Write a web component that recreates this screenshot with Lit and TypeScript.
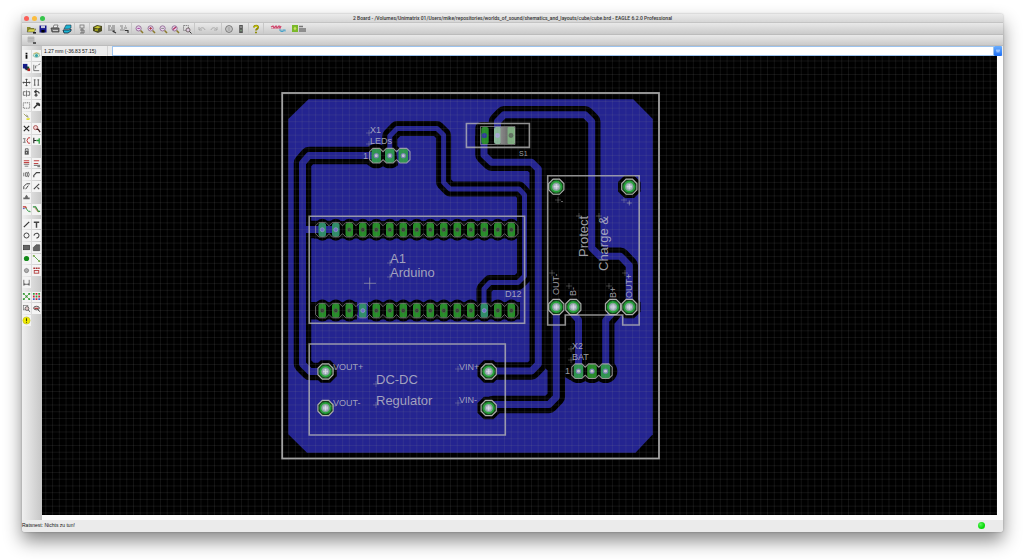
import { LitElement, html, css, svg, SVGTemplateResult } from "lit";
import { customElement } from "lit/decorators.js";

type Icon = { label: string; art: SVGTemplateResult };
const icon = (label: string, art: SVGTemplateResult): Icon => ({ label, art });

const lens = (mark: SVGTemplateResult) => svg`
  <circle cx="4.6" cy="4.4" r="2.6" fill="#e9d6ec" stroke="#8d6a92" stroke-width=".9"/>
  <path d="M6.6 6.4L9 9" stroke="#8a7a2c" stroke-width="1.5"/>${mark}`;

const toolbar: Icon[][] = [
  [
    icon("Open", svg`<path d="M1 3h3l1 1h3v4H1z" fill="#8a8a30"/><path d="M1 8l2-3h7L8 8z" fill="#d9d84a" stroke="#444" stroke-width=".5"/><path d="M7 8h3v1.6H7z" fill="#222"/>`),
    icon("Save", svg`<rect x="1.5" y="1.5" width="7" height="7" fill="#16168c"/><rect x="3" y="1.5" width="4" height="2.6" fill="#c9c9dc"/><rect x="3.4" y="6" width="3.2" height="2.5" fill="#000"/>`),
    icon("Print", svg`<path d="M3 4l1-3h4L7 4z" fill="#eee" stroke="#444" stroke-width=".6"/><path d="M1 4h8v4H2z" fill="#777" stroke="#333" stroke-width=".7"/><path d="M3 6.500h5" stroke="#ddd" stroke-width=".8"/>`),
    icon("CAM processor", svg`<path d="M4 1h5v3L6 5H2z" fill="#1cb5d4" stroke="#234" stroke-width=".6"/><path d="M1 6h6l2-1v2L6 9H2z" fill="#1cb5d4" stroke="#123" stroke-width=".8"/>`),
  ],
  [icon("Switch to schematic", svg`<rect x="3" y="1" width="4" height="3" fill="none" stroke="#777" stroke-width=".8"/><path d="M3 6h4M5 4v5M3 9h4V6" stroke="#666" stroke-width=".9" fill="none"/>`)],
  [icon("Use library", svg`<path d="M1 3l4-2 5 1v5L6 9 1 7z" fill="#4a4a20"/><path d="M2 3.500l3.500-1.500 3.500 1-3 1.500z" fill="#c9c631"/><path d="M3 5h3v2H3z" fill="#9a9a20"/>`)],
  [
    icon("Run script", svg`<path d="M1 2h3M1 4h2M5 2h3M4 4h4M1 6h5" stroke="#777" stroke-width="1"/><path d="M7 5.500v3M5.500 7L9 9" stroke="#333" stroke-width="1.100"/>`),
    icon("Run ULP", svg`<path d="M1 2h3M2 4h2M6 2h1M5 4h3M1 6h5" stroke="#888" stroke-width="1"/><path d="M6 6.500h3v2.500" stroke="#333" stroke-width="1.100" fill="none"/>`),
  ],
  [
    icon("Zoom to fit", lens(svg`<path d="M3.400 4.400h2.400" stroke="#a33a9a" stroke-width="1"/>`)),
    icon("Zoom in", lens(svg`<path d="M3.200 4.400h2.800M4.600 3v2.800" stroke="#a34" stroke-width=".9"/>`)),
    icon("Zoom out", lens(svg`<path d="M3.200 4.400h2.800" stroke="#666" stroke-width=".7"/>`)),
    icon("Redraw", lens(svg`<path d="M3 5.500l3-2.500" stroke="#b03060" stroke-width="1.300"/>`)),
    icon("Zoom select", svg`<rect x="1.500" y="1.500" width="5" height="5" fill="none" stroke="#888" stroke-dasharray="1.500 .6"/><circle cx="6" cy="6" r="2" fill="#dcc9df" stroke="#655" stroke-width=".8"/><path d="M7.500 7.500L9.500 9.500" stroke="#333"/>`),
  ],
  [
    icon("Undo", svg`<path d="M2 3v3h3M2 6c2-3 5-3 6 0" fill="none" stroke="#aaa" stroke-width="1"/>`),
    icon("Redo", svg`<path d="M8 3v3H5M8 6C6 3 3 3 2 6" fill="none" stroke="#aaa" stroke-width="1"/>`),
  ],
  [
    icon("Stop", svg`<circle cx="5" cy="5" r="3.400" fill="#d4d4d4" stroke="#777"/><path d="M3.500 4h3M3.500 6h3" stroke="#888" stroke-width=".9"/>`),
    icon("Go", svg`<rect x="3.200" y="1" width="3.600" height="8" fill="#555"/><circle cx="5" cy="3" r="1" fill="#999"/><circle cx="5" cy="6.500" r="1" fill="#7a947a"/>`),
  ],
  [icon("Help", svg`<path d="M3 3.500C3 1 7.500 1 7 3.600 6.800 5 5 4.800 5 6.600M5 7.800v1.500" fill="none" stroke="#8d8a00" stroke-width="1.900"/><path d="M3.300 3.300C3.600 1.500 7 1.600 6.700 3.500" fill="none" stroke="#e8e000" stroke-width=".9"/>`)],
];

const line = (d: string, c = "#444", w = 1) => svg`<path d=${d} fill="none" stroke=${c} stroke-width=${w}/>`;

const tools: (Icon | null)[][] = [
  [
    icon("Info", svg`<path d="M5 2v1.300M5 4v4.500" stroke="#111" stroke-width="2"/>`),
    icon("Show", svg`<path d="M1 5q4-5 8 0-4 4-8 0z" fill="#e8f4dc" stroke="#5aa08a" stroke-width=".8"/><circle cx="5" cy="5" r="1.700" fill="#37a2a8"/><path d="M1.500 3Q5 .500 8.500 3" stroke="#c8b04a" stroke-width=".8" fill="none"/>`),
    icon("Display", svg`<rect x="1" y="1" width="5" height="5" fill="#111a8c"/><path d="M4 4h4v4H4z" fill="#0c5c2c"/><path d="M6 6h3v3H6z" fill="#b02020"/><path d="M3 4h3v3H3z" fill="#1c1c60"/>`),
    icon("Mark", line("M2 2v6.500h6M4 6V3M5 3h1M7 2l2-1", "#555", 0.9)),
  ],
  [
    icon("Move", line("M5 1v8M1 5h8M4 2l1-1 1 1M4 8l1 1 1-1M2 4L1 5l1 1M8 4l1 1-1 1")),
    icon("Copy", line("M3 2v6M7 2v6M2 2h2M6 2h2M2 8h2M6 8h2", "#555")),
    icon("Mirror", line("M5 1.500v7M4 3H1.500v4H4M6 3h2.500v4H6", "#666")),
    icon("Rotate", svg`${line("M5 1L3 3l2 2M3 3q5-1 5 2", "#333", 1.3)}<circle cx="4.500" cy="7" r="1.600" fill="#555"/>`),
    icon("Group", svg`<rect x="1.500" y="2" width="7" height="6" fill="none" stroke="#555" stroke-width=".9" stroke-dasharray="1.200 .8"/>`),
    icon("Change", line("M2 8l4-4M5 2l1 2 3 1M6 2.500q3 0 2 3", "#333", 1.5)),
    icon("Paste", svg`${line("M2 2l4 4", "#a0a060")}${line("M5 3l2 3", "#777")}<path d="M5 7h4l-1 2H5z" fill="#e2df32"/>`),
    null,
    icon("Delete", line("M2 2l6 6M8 2L2 8", "#222", 1.3)),
    icon("Add", svg`<circle cx="4" cy="4" r="2.300" fill="#f0d0d0" stroke="#a04040" stroke-width=".9"/><path d="M5 6h2l2 3" stroke="#402020" stroke-width="1.400" fill="none"/>`),
    icon("Pinswap", svg`${line("M1 3h3M1 7h3M3 3v4", "#777")}${line("M9 2H7L5.500 5 7 8h2", "#c23a3a", 1.1)}`),
    icon("Replace", svg`${line("M2 2v6M2 5h3", "#222", 1.2)}${line("M5 5h3M8 2.500v6", "#1f9c34", 1.4)}`),
    icon("Lock", svg`<rect x="3" y="4" width="4.500" height="4.500" fill="#555"/>${line("M3.800 4V2h3v2", "#555")}<path d="M5 5.500v1.500" stroke="#ddd"/>`),
    null,
    icon("Name", svg`${line("M2 2h6M2 4h6", "#c04444", 1.2)}${line("M2 6h6M3 8h4", "#777")}`),
    icon("Value", svg`${line("M2 2h6M2 5h5", "#c04444", 1.2)}${line("M2 7h7M6 8.500h3", "#555")}`),
    icon("Smash", svg`${line("M2 3v4M4 3h2v4H4zM7 2q2 3 0 6", "#666")}`),
    icon("Miter", line("M2 8V6l3-3h4", "#444", 1.3)),
    icon("Split", line("M2 8V5l3-3h4M4 8l3-4", "#444", 1.1)),
    icon("Optimize", line("M2 8L8 2M6 6l2 2", "#444", 1.2)),
    icon("Meander", svg`<path d="M1.500 7V5h2V4l1.500-2L6.500 4v1h2v2z" fill="#666"/>`),
    null,
    icon("Route", svg`${line("M1 2h3l1 2", "#c02a2a", 1.3)}${line("M4 3l3 4h2v1", "#3a9c4a", 1.1)}<path d="M1 4h2" stroke="#44b"/>`),
    icon("Ripup", svg`${line("M1 2h3l3 5h2", "#2b8c3a", 1.3)}${line("M3 3l4 5", "#b46a3a", 0.8)}`),
  ],
  [
    icon("Wire", line("M2 8l6-6", "#333", 1.3)),
    icon("Text", line("M2 2.500h6M5 2.500v6", "#444", 1.6)),
    icon("Circle", svg`<circle cx="5" cy="5" r="2.800" fill="none" stroke="#444" stroke-width="1.100"/>`),
    icon("Arc", line("M2 5q1-3 4-2.500Q9 4 7 7L5 8", "#444", 1.2)),
    icon("Rect", svg`<rect x="1.500" y="2.500" width="7" height="5" fill="#666" stroke="#333" stroke-width=".7"/>`),
    icon("Polygon", svg`<path d="M1.500 8.500V5l3-3h4v6.500z" fill="#666" stroke="#444" stroke-width=".7"/>`),
    icon("Via", svg`<circle cx="5" cy="5" r="2.900" fill="#128a18"/>`),
    icon("Signal", svg`${line("M2 2l6 6", "#57a545", 1)}<path d="M1 1h2v2H1zM7 7h2v2H7z" fill="#78a848"/>`),
    icon("Hole", svg`<circle cx="5" cy="5" r="2" fill="none" stroke="#777" stroke-width="1.200"/>${line("M5 2v6M2 5h6", "#999", 0.6)}`),
    icon("Attribute", svg`<path d="M1.500 2.500h7" stroke="#a33" stroke-width="1.400" stroke-dasharray="2 .7"/><rect x="2.500" y="5" width="5" height="3" fill="#eee" stroke="#b44040"/>`),
    icon("Dimension", line("M2 2v6.500M8 2v6.500M2 7h6M3 6v2M7 6v2", "#555", 0.9)),
    null,
  ],
  [
    icon("Ratsnest", svg`${line("M2 2l6 6M8 2L2 8", "#7a9c50", 0.9)}<path d="M1 1h2v2H1zM7 1h2v2H7zM1 7h2v2H1zM7 7h2v2H7zM4 4h2v2H4z" fill="#2f9a36"/>`),
    icon("Auto", svg`<path d="M1 1h2v2H1zM7 1h2v2H7zM4 4h2v2H4z" fill="#2a9a36"/><path d="M4 1h2v2H4zM1 4h2v2H1zM7 4h2v2H7zM4 7h2v2H4z" fill="#cc2038"/><path d="M1 7h2v2H1zM7 7h2v2H7z" fill="#3b5fbe"/>`),
    icon("ERC", svg`<rect x="1.500" y="1.500" width="5" height="5" fill="none" stroke="#777" stroke-width=".8"/><circle cx="5.500" cy="5" r="2.100" fill="#e2c8c8" stroke="#555" stroke-width=".9"/>${line("M7 7l2 1.500", "#333")}`),
    icon("DRC", svg`<ellipse cx="5" cy="4.500" rx="3.200" ry="2" fill="#d9b8b8" stroke="#555" stroke-width="1"/>${line("M3 5h4", "#a33")}${line("M6.500 6.500L9 8.500", "#333")}`),
    icon("Errors", svg`<circle cx="5" cy="5" r="4" fill="#f0ec00" stroke="#b9b520" stroke-width=".6"/><path d="M5 2.500v3M5 6.500v1" stroke="#444400" stroke-width="1.200"/>`),
    null,
  ],
];

/* Routed signals of the bottom layer; thin marks the narrower net class. */
const traces: { d: string; thin?: boolean }[] = [
  { d: "M376.3 155.5H309L302.5 163V364L310 371.500H325.500" },
  { d: "M336 229.500H302.500" },
  { d: "M389.8 155.500V136L397 128.500H437L443.600 135V182.500L450 189H519L524.500 195V276L518 282.500H490L484 289V310.500", thin: true },
  { d: "M484 135.500V155L491.500 162.200H531.500L538.300 169V364L531.500 371H488.700" },
  { d: "M497.500 135.500V121.500L504 114.800H585L591.700 121.500V248L600 256.300H620.500L629.300 265.500V307" },
  { d: "M556.3 307V397L549 404.500H493L488.700 408" },
  { d: "M573.3 307V314L578.500 320V371" },
  { d: "M613 307V312L605.700 320.500V371" },
];

const header = Array.from({ length: 15 }, (_, i) => 322.3 + i * 13.5);
const roundPads = [
  { x: 556.3, y: 186.7 }, { x: 629.3, y: 186.7, gap: true },
  { x: 556.3, y: 307, gap: true }, { x: 573.3, y: 307, gap: true },
  { x: 613, y: 307, gap: true }, { x: 629.3, y: 307, gap: true },
  { x: 325.5, y: 371.5, gap: true }, { x: 325.5, y: 408 },
  { x: 488.7, y: 371.5, gap: true }, { x: 488.7, y: 408, gap: true },
];

const octagon = (x: number, y: number, r: number) => {
  const c = r * 0.42;
  return [[-c, -r], [c, -r], [r, -c], [r, c], [c, r], [-c, r], [-r, c], [-r, -c]]
    .map(([a, b]) => `${x + a},${y + b}`).join(" ");
};

const chain = (xs: number[], y: number) => {
  const side = (list: number[], s: number) =>
    list.map((x) => `L${x - 6.7 * s} ${y - 4 * s}L${x - 3.4 * s} ${y - 7.3 * s}L${x + 3.4 * s} ${y - 7.3 * s}L${x + 6.7 * s} ${y - 4 * s}`).join("");
  return ("M" + side(xs, 1).slice(1) + side([...xs].reverse(), -1) + "Z");
};

const labels: { t: string; x: number; y: number; s: string; up?: boolean }[] = [
  { t: "X1", x: 370, y: 133, s: "sm" }, { t: "LEDs", x: 370, y: 144, s: "sm" },
  { t: "1", x: 363, y: 159, s: "sm" },
  { t: "A1", x: 390, y: 263, s: "lg" }, { t: "Arduino", x: 390, y: 277, s: "lg" },
  { t: "D12", x: 505, y: 297, s: "sm" }, { t: "S1", x: 519, y: 156, s: "xs" },
  { t: "VOUT+", x: 333, y: 370, s: "sm" }, { t: "VOUT-", x: 333, y: 406, s: "sm" },
  { t: "VIN+", x: 459, y: 370, s: "sm" }, { t: "VIN-", x: 459, y: 403, s: "sm" },
  { t: "DC-DC", x: 376, y: 384, s: "lg" }, { t: "Regulator", x: 376, y: 405, s: "lg" },
  { t: "Protect", x: 588, y: 257, s: "lg", up: true }, { t: "Charge &", x: 608, y: 271, s: "lg", up: true },
  { t: "OUT-", x: 559, y: 295, s: "sm", up: true }, { t: "B-", x: 576, y: 296, s: "sm", up: true },
  { t: "B+", x: 616, y: 298, s: "sm", up: true }, { t: "OUT+", x: 632, y: 298, s: "sm", up: true },
  { t: "X2", x: 572, y: 349, s: "sm" }, { t: "BAT", x: 572, y: 360, s: "sm" },
  { t: "1", x: 565, y: 374, s: "sm" },
];

const origins = [
  [369, 133], [369, 144], [390, 263], [390, 277], [376, 384], [376, 405],
  [458, 369], [458, 403], [333, 369], [333, 406], [571, 349], [571, 360], [558, 200],
  [624, 200], [579, 216], [599, 216], [552, 273], [569, 286], [609, 286], [625, 273],
];

@customElement("pcb-board")
export class PcbBoard extends LitElement {
  static styles = css`
    :host { display: block; background: #000; overflow: hidden; min-height: 0; }
    svg { display: block; width: 100%; height: 100%; }
    text { font-family: "Liberation Sans", Arial, sans-serif; fill: #c0c0ca; fill-opacity: .82; }
    .lg { font-size: 13px; }
    .sm { font-size: 9px; }
    .xs { font-size: 7px; }
    .copper { fill: #242490; }
    .gap { fill: none; stroke: #000; stroke-width: 17.5; stroke-linejoin: round; }
    .gap.thin { stroke-width: 15; }
    .trace { fill: none; stroke: #242490; stroke-width: 7; stroke-linejoin: round; stroke-linecap: round; }
    .trace.thin { stroke-width: 5; }
    .silk { fill: none; stroke: #b8b8b8; stroke-opacity: .78; stroke-width: 1.6; }
    .fine { fill: none; stroke: #b4b4b4; stroke-opacity: .7; stroke-width: .8; }
    .edge { fill: none; stroke: #a4a4a4; stroke-width: 1.8; }
    .pad { fill: #278c29; }
    .cross { stroke: #b4b4b4; stroke-opacity: .55; stroke-width: .6; }
  `;

  private rowPads(y: number, routed: number[]) {
    return header.map((x, i) => svg`
      <rect class="pad" x=${x - 3.8} y=${y - 7} width="7.6" height="14" rx="2.6"
        style=${routed.includes(i) ? "fill:#2f8c68" : ""}></rect>
      <circle cx=${x} cy=${y} r="2" fill=${routed.includes(i) ? "#6a6ad0" : "#2c3a2c"} stroke=${routed.includes(i) ? "#8c9cc0" : "#506050"} stroke-width=".8"></circle>`);
  }

  private plug(xs: number[], y: number, bare: number) {
    return svg`${xs.map((x, i) => svg`
      <rect class="pad" x=${x - 4.8} y=${y - 7.2} width="9.6" height="14.4" rx="3.6" style=${i === bare ? "" : "fill:#2f9450"}></rect>
      <circle cx=${x} cy=${y} r="2.6" fill="#7884b4"></circle>
      <circle cx=${x} cy=${y} r="1.4" fill="#d0d0d8"></circle>`)}
      <path class="silk" style="stroke-width:1.1" d=${chain(xs, y)}></path>`;
  }

  render() {
    const led = [376.3, 389.8, 403.3];
    const bat = [578.5, 592, 605.5];
    return html`<svg viewBox="42 56 955 459" role="img" aria-label="Board layout">
      <defs>
        <pattern id="grid" x="369.1" y="283.1" width="6.745" height="6.745" patternUnits="userSpaceOnUse">
          <path d="M.3 0V6.745M0 .3H6.745" stroke="#8c8c8c" stroke-opacity=".26" stroke-width=".6" fill="none"/>
        </pattern>
        <linearGradient id="fade"><stop offset="0" stop-color="#8a8a8a"/><stop offset="1" stop-color="#686868"/></linearGradient>
      </defs>
      <path class="copper" d="M308.500 99.300H633.300L652.800 119V434.300L635.500 452.700H307L288.300 434.300V119Z"></path>
      <path fill="#000" d="M484 135L497.500 120L504 115H592V256H629V307L613 310L606 322V380H570L563 376H556V370H547L538 360V169L531 162H491L484 155Z"></path>
      ${traces.map((t) => svg`<path class="gap ${t.thin ? "thin" : ""}" d=${t.d}></path>`)}
      <rect x="475.300" y="122" width="18" height="27" rx="6"/>
      ${header.map((x, i) => svg`<ellipse cx=${x} cy="229.700" rx="8.500" ry="11"></ellipse>
        ${i === 3 ? "" : svg`<ellipse cx=${x} cy="310.600" rx="8.500" ry="11"></ellipse>`}`)}
      <rect x="314" y="221" width="206" height="17.500"/>
      <rect x="311" y="302" width="46" height="17.500"/>
      <rect x="368" y="302" width="152" height="17.500"/>
      ${led.slice(0, 2).map((x) => svg`<circle cx=${x} cy="156" r="12.300"></circle>`)}
      ${bat.map((x) => svg`<circle cx=${x} cy="371.300" r="11.800"></circle>`)}
      ${roundPads.filter((p) => p.gap).map((p) => svg`<polygon points=${octagon(p.x, p.y, 11.3)}></polygon>`)}
      <path class="copper" d="M396 150h14v15h-12zM360 298h6v25h-6z"/>
      ${traces.map((t) => svg`<path class="trace ${t.thin ? "thin" : ""}" d=${t.d}></path>`)}

      ${this.rowPads(229.7, [0, 1])}
      ${this.rowPads(310.6, [3, 12])}
      <path class="fine" d=${chain(header, 229.7)}></path>
      <path class="fine" d=${chain(header, 310.6)}></path>
      ${this.plug(led, 155.7, -1)}
      ${this.plug(bat, 371.2, 1)}

      ${roundPads.map((p) => svg`
        <polygon points=${octagon(p.x, p.y, 7.6)} fill="#15401a" stroke="#b0b0b0" stroke-width="1.100"></polygon>
        <circle cx=${p.x} cy=${p.y} r="5.200" fill="#7fae8c" stroke="#1fa035" stroke-width="1.800"></circle>
        <circle cx=${p.x} cy=${p.y} r="3.300" fill="#b4bccb" stroke="#8094a0" stroke-width=".6"></circle>
        <path d="M${p.x - 2.5} ${p.y}h5M${p.x} ${p.y - 2.5}v5" stroke="#e4e4ec" stroke-width=".7"></path>`)}

      <rect x="481.300" y="127" width="7.400" height="17" rx="2" class="pad"/>
      <rect x="494" y="127" width="7.500" height="17" rx="2" fill="#8ab89a"/>
      <rect x="500.500" y="127" width="8" height="17" fill="url(#fade)"/>
      <rect x="507.500" y="127" width="7.500" height="17" rx="1" fill="#7fae80"/>
      <circle cx="484.300" cy="135.500" r="2.600" fill="#2c3c98"/>
      <circle cx="497.500" cy="135.500" r="2.400" fill="#a9a9d8"/>
      <circle cx="511" cy="135.500" r="2.400" fill="#5f6f5f"/>
      <path class="fine" d="M480.500 126.500H515V144.500H480.500Z"/>

      <rect class="edge" x="282.200" y="93" width="376.800" height="365.500"/>
      <path class="silk" d="M309.200 216.300H524.600V323.300H309.200ZM309.200 344H505.300V435H309.200ZM466.400 123.500H529.400V147.400H466.400ZM547.700 175.700H639.200V325H622.700V315H565.300V325H547.700Z"/>
      <path class="cross" style="stroke-width:1" d="M364 283.300h12M369.700 277.500v12M626.800 203h5M629.300 200.500v5M561 201.500h2"/>
      <path class="cross" d=${origins.map(([x, y]) => `M${x - 3} ${y}h6M${x} ${y - 3}v6`).join("")}></path>
      ${labels.map((l) => svg`<text class=${l.s} transform="translate(${l.x} ${l.y})${l.up ? " rotate(-90)" : ""}">${l.t}</text>`)}
      <rect x="-3000" y="-3000" width="7000" height="7000" fill="url(#grid)"/>
    </svg>`;
  }
}

@customElement("app-root")
export class AppRoot extends LitElement {
  static styles = css`
    * { box-sizing: border-box; }
    :host {
      display: flex; height: 100vh; box-sizing: border-box; padding: 14px 21px 28px 22px;
      background: #fff; overflow: hidden;
      font: 5px/8px "Liberation Sans", Arial, sans-serif; color: #111;
    }
    .window {
      flex: 1; min-width: 0; display: flex; flex-direction: column;
      background: #ececec; border-radius: 2px 2px 3px 3px;
      box-shadow: 0 9px 18px rgba(0,0,0,.46), 0 0 2px rgba(0,0,0,.3);
    }
    button { border: 0; padding: 0; background: none; display: grid; place-items: center; }
    button svg { display: block; width: 10px; height: 10px; }
    .title {
      height: 9px; display: grid; grid-template-columns: 1fr auto 1fr; align-items: center;
      background: linear-gradient(#ebebeb, #d6d6d6); border-radius: 2px 2px 0 0;
      border-bottom: 1px solid #c4c4c4;
    }
    h1 { margin: 0; font: 500 5px/8px Roboto, sans-serif; color: #333; white-space: nowrap; }
    .lights { display: flex; gap: 3px; padding-left: 2px; }
    .light { width: 5px; height: 5px; border-radius: 50%; background: #fb5f58; }
    .light.min { background: #fbbd3f; }
    .light.max { background: #35c54b; }
    .bar {
      height: 12px; display: flex; align-items: center; padding-left: 3px;
      background: linear-gradient(#e9e9e9, #cacaca); border-bottom: 1px solid #bcbcbc;
    }
    .bar.options { height: 11px; padding-left: 5px; }
    .set { display: flex; gap: 1px; padding-right: 2px; margin-right: 1px; border-right: 1px solid #c8c8c8; }
    .set button { width: 11px; height: 11px; }
    .link { padding-left: 5px; display: block; }
    .link svg { display: block; height: 9px; }
    .main { flex: 1; min-height: 0; display: grid; grid-template-columns: 20px 1fr; }
    .side { padding-top: 4px; background: linear-gradient(90deg, #f0f0f0, #c6c6c6); }
    .tools { height: 276px; display: flex; flex-direction: column; gap: 4px; }
    .group {
      flex: 1 1 0; min-height: 0; display: grid; grid-template-columns: 9px 9px;
      grid-auto-rows: 1fr; gap: 1px;
    }
    .group button { background: #f4f4f4; }
    .group svg { width: 9px; height: 9px; }
    .work { min-width: 0; display: flex; flex-direction: column; background: #fdfdfd; }
    .command { height: 10px; display: flex; background: #ececec; }
    .coords { width: 66px; padding: 1px 2px; border-right: 1px solid #d2d2d2; margin-right: 4px; white-space: nowrap; }
    .entry { flex: 1; min-width: 0; border: 1px solid #9cc3ee; background: #fff; padding: 0 2px; font: inherit; outline: 0; }
    .drop { width: 8px; margin-right: 1px; border-radius: 1px; background: linear-gradient(#6aaeff, #1c6ef5); }
    .drop svg { width: 8px; height: 8px; }
    pcb-board { flex: 1; margin: 0 6px 5px 0; }
    .status { height: 12px; display: flex; justify-content: space-between; align-items: center; padding: 0 18px 2px 0; background: #ebebeb; border-radius: 0 0 3px 3px; }
    .led { width: 7px; height: 7px; border-radius: 50%; background: radial-gradient(circle at 35% 35%, #5cf75c, #08d808 60%); }
  `;

  private button(i: Icon) {
    return html`<button aria-label=${i.label}><svg viewBox="0 0 10 10">${i.art}</svg></button>`;
  }

  render() {
    return html`<div class="window">
      <header class="title">
        <div class="lights">
          <button class="light" aria-label="Close"></button>
          <button class="light min" aria-label="Minimise"></button>
          <button class="light max" aria-label="Zoom"></button>
        </div>
        <h1>2 Board - /Volumes/Unimatrix 01/Users/mike/repositories/worlds_of_sound/shematics_and_layouts/cube/cube.brd - EAGLE 6.2.0 Professional</h1>
      </header>
      <nav class="bar">
        ${toolbar.map((g) => html`<div class="set">${g.map((i) => this.button(i))}</div>`)}
        <a class="link" href="#design" aria-label="Design link"><svg width="17" viewBox="0 0 17 9"><path d="M1 3l2-1 1 2 2-2 1 2 2-2 1 2 1-2" stroke="#d0456c" stroke-width="1.300" fill="none"/><path d="M1 4.500h9" stroke="#d98098" stroke-width=".7"/><path d="M9 6h2v1.500h2V6h2v1.500" stroke="#48a2c8" stroke-width="1.100" fill="none"/></svg></a>
        <a class="link" href="#pcb" aria-label="PCB service"><svg width="15" viewBox="0 0 15 9"><rect width="6" height="7" y="1" fill="#7ab82a"/><path d="M1.500 4.500l1.500-2 1.500 2-1.500 2z" fill="#c8e060"/><path d="M7 2.500h4M7 5h7M7 7h7" stroke="#777" stroke-width="1.300"/></svg></a>
      </nav>
      <div class="bar options">
        <button aria-label="Grid"><svg viewBox="0 0 10 10"><path d="M1 2h6v5H1zM1 3.500h6M1 5.200h6M3 2v5M5 2v5" fill="#ccc" stroke="#aaa" stroke-width=".6"/><path d="M6 8h3" stroke="#333" stroke-width="1.500"/></svg></button>
      </div>
      <div class="main">
        <aside class="side"><div class="tools">
          ${tools.map((g) => html`<div class="group" style="flex-grow:${Math.ceil(g.length / 2)}">
            ${g.map((i) => (i ? this.button(i) : html`<span></span>`))}</div>`)}
        </div></aside>
        <section class="work">
          <div class="command">
            <label class="coords" for="cmd">1.27 mm (-36.83 57.15)</label>
            <input class="entry" id="cmd" type="text" />
            <button class="drop" aria-label="History"><svg viewBox="0 0 10 10"><path d="M2.500 4h5M3 6h4" stroke="#d5e6ff" stroke-width="1"/></svg></button>
          </div>
          <pcb-board></pcb-board>
        </section>
      </div>
      <footer class="status"><span>Ratsnest: Nichts zu tun!</span><span class="led"></span></footer>
    </div>`;
  }
}
